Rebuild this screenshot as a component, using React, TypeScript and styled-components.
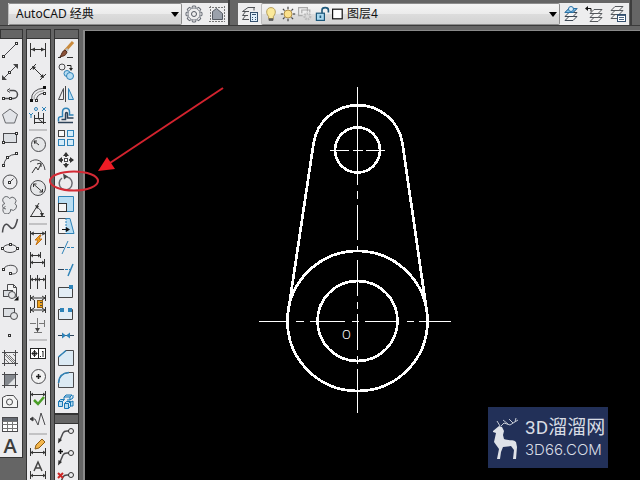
import React, { ReactNode } from "react";
import styled, { createGlobalStyle } from "styled-components";

const INK = "#4a4a4d";
const BLUE = "#2f83b8";
const NAVY = "#2d4258";
const SKY = "#b9ddf2";
const SHADE = "#dcdfe3";

const GlobalStyle = createGlobalStyle`
  * { box-sizing: border-box; }
  body { margin: 0; background: #656565; overflow: hidden; }
  button, select { font-family: "Noto Sans", "Noto Sans CJK SC", sans-serif; }
`;

const Window = styled.div`
  display: flex;
  flex-direction: column;
  height: 100vh;
  background: #656565;
  overflow: hidden;
`;

const TopBar = styled.header`
  display: flex;
  flex: none;
  height: 26px;
  padding: 3px 8px 0;
  background: #656565;
  border-bottom: 1px solid #3a3a3a;
`;

const Toolbar = styled.div<{ $grow?: boolean }>`
  display: flex;
  flex: ${(p) => (p.$grow ? "1" : "none")};
  min-width: 0;
  height: 22px;
  background: #ededee;
`;

const Divider = styled.div<{ $last?: boolean }>`
  flex: none;
  width: 2px;
  height: 25px;
  margin: -3px ${(p) => (p.$last ? "0" : "8px")} 0 ${(p) => (p.$last ? "1px" : "0")};
  background: #3d3d3d;
`;

const Combo = styled.div<{ $grow?: boolean }>`
  position: relative;
  display: flex;
  align-items: center;
  flex: ${(p) => (p.$grow ? "1" : "none")};
  width: ${(p) => (p.$grow ? "auto" : "174px")};
  min-width: 0;
  height: 22px;
  padding-left: ${(p) => (p.$grow ? "1px" : "0")};
  border: 1px solid #8d8d8d;
  border-left-color: #bdbdbd;
  border-radius: 2px;
  background: linear-gradient(#f5f5f5, #ebebeb 50%, #dcdcdc 52%, #d2d2d2);
`;

const Select = styled.select<{ $indent: number }>`
  flex: 1;
  min-width: 0;
  height: 20px;
  padding: 0 20px 0 ${(p) => p.$indent}px;
  border: 0;
  outline: 0;
  appearance: none;
  background: transparent;
  color: #111;
  font-size: 12px;
  line-height: 20px;
`;

const Caret = styled.svg`
  position: absolute;
  right: 2px;
  top: 8px;
  width: 8px;
  height: 5px;
  pointer-events: none;
`;

const StateIcons = styled.span`
  display: flex;
  flex: none;
  gap: 1px;
`;

const BarButton = styled.button`
  flex: none;
  width: 23px;
  height: 22px;
  padding: 1px;
  border: 0;
  background: transparent;
`;

const Workspace = styled.div`
  display: flex;
  flex: 1;
  min-height: 0;
  padding-top: 3px;
`;

const Column = styled.div<{ $first?: boolean }>`
  flex: none;
  width: ${(p) => (p.$first ? "23px" : "25px")};
  margin-right: 3px;
`;

const Palette = styled.div<{ $first?: boolean }>`
  padding-left: ${(p) => (p.$first ? "0" : "1px")};
  background: #ececee;
  border: 1px solid #343434;
  border-left-width: ${(p) => (p.$first ? "0" : "1px")};
  border-top-width: 0;
`;

const Grip = styled.div`
  height: 10px;
  background: #656565;
  border: 1px solid #343434;
`;

const Tool = styled.button`
  display: flex;
  align-items: center;
  justify-content: center;
  width: 20px;
  height: 22px;
  padding: 0;
  border: 0;
  background: transparent;
  color: #333;
`;

const Letter = styled.span`
  font-family: "Open Sans", sans-serif;
  font-size: 20px;
  line-height: 20px;
  font-weight: 600;
  color: #3d3d3d;
`;

const Separator = styled.div`
  height: 2px;
  margin: 2px 3px 2px 1px;
  background: #c2c2c4;
`;

const Canvas = styled.main`
  position: relative;
  flex: 1;
  min-width: 0;
  margin-left: 1px;
  margin-top: 1px;
  border-top: 1px solid #8a8a8a;
  border-left: 2px solid #8a8a8a;
  background: #000;
`;

const Drawing = styled.svg`
  display: block;
  width: 100%;
  height: 100%;
`;

const Annotation = styled.svg`
  position: absolute;
  left: 40px;
  top: 80px;
  width: 190px;
  height: 120px;
  pointer-events: none;
`;

const Watermark = styled.div`
  position: absolute;
  right: 32px;
  bottom: 12px;
  display: flex;
  align-items: center;
  gap: 4px;
  width: 120px;
  height: 61px;
  padding-left: 3px;
  background: #223058;
  color: #d8dce4;
`;

const Brand = styled.div`
  display: flex;
  flex-direction: column;
`;

const BrandName = styled.span`
  font-family: Roboto, "Noto Sans CJK SC", sans-serif;
  font-size: 19px;
  line-height: 22px;
  font-weight: 400;
  white-space: nowrap;
`;

const BrandSite = styled.span`
  margin-top: 3px;
  font-family: Inter, sans-serif;
  font-size: 15px;
  line-height: 16px;
  font-weight: 300;
  white-space: nowrap;
`;

function Icon({ children, size = 20 }: { children: ReactNode; size?: number }) {
  return (
    <svg width={size} height={size} viewBox="0 0 20 20" fill="none" stroke={INK} strokeWidth="1" aria-hidden="true">
      {children}
    </svg>
  );
}

/* Small square handle centred on a point. */
function Grips({ at, fill = "#fff", color = "#333" }: { at: number[][]; fill?: string; color?: string }) {
  return (
    <>
      {at.map(([x, y]) => (
        <rect key={`${x}-${y}`} x={x - 1} y={y - 1} width="2" height="2" fill={fill} stroke={color} />
      ))}
    </>
  );
}

type Item = { name: string; icon: ReactNode } | "separator";

const span = (y: number) => (
  <path d={`M2.5 ${y - 3}v6M17.5 ${y - 3}v6M3 ${y}h14M6 ${y - 2}l-3 2 3 2M14 ${y - 2}l3 2-3 2`} stroke="#333" />
);

const leader = (
  <>
    <path d="M4 15l3-7q1-2 4-2h2" strokeWidth="1.500" />
    <circle cx="15" cy="6" r="2.500" stroke="#333" />
    <path d="M2 18.500l.5-5.500 3.500 2z" fill="#333" stroke="none" />
  </>
);

const drawTools: Item[] = [
  { name: "Line", icon: <><path d="M3.500 16.500L16.500 3.500" /><Grips at={[[3.5, 16.500], [16.500, 3.500]]} /></> },
  { name: "Construction line", icon: <><path d="M3 17L17 3" /><path d="M2 18v-5l5 5zM18 2v5l-5-5z" fill="#444" stroke="none" /><Grips at={[[9.500, 10.500]]} /></> },
  { name: "Polyline", icon: <><path d="M3.500 14.500h10a4 4 0 0 0 0-8H9.500" strokeWidth="1.500" /><path d="M10 4.500l-3 2 3 2" /><Grips at={[[3.5, 14.500], [10.5, 14.500]]} /></> },
  { name: "Polygon", icon: <path d="M10 3l7.500 5.500-3 8.500h-9l-3-8.500z" fill="#e2e4e8" stroke="#66686c" /> },
  { name: "Rectangle", icon: <><rect x="3.500" y="5.500" width="13" height="9" fill={SHADE} /><Grips at={[[3.5, 14.500], [16.500, 5.500]]} /></> },
  { name: "Arc", icon: <><path d="M3.500 16Q5 5 16.500 4" /><Grips at={[[3.5, 15.500], [7.500, 7.500], [16.500, 3.500]]} /></> },
  { name: "Circle", icon: <><circle cx="10" cy="10" r="7" /><path d="M9.500 10.500l4-4" /><Grips at={[[9.500, 10.500]]} /></> },
  { name: "Revision cloud", icon: <path d="M5 9.500A3.600 3.600 0 1 1 9.500 4.500 3.600 3.600 0 1 1 15 9.500 3.600 3.600 0 1 1 10.500 15.500 3.800 3.800 0 1 1 5.500 12.500M5 9.500Q2 10 2.500 12.500T6 15" fill="#e7e8ea" stroke="#66686c" /> },
  { name: "Spline", icon: <path d="M2.500 16.500C3 9 6 6 9 10s6 4 8.500-7" strokeWidth="1.500" /> },
  { name: "Ellipse", icon: <><ellipse cx="10" cy="10.500" rx="7" ry="4" /><Grips at={[[2.500, 10.500], [17.500, 10.500], [10.500, 6.500]]} /></> },
  { name: "Elliptical arc", icon: <><path d="M3.500 9C6 4 16 4 17 9s-3 5-6 5" /><Grips at={[[3.500, 9.500], [10.500, 13.500]]} /></> },
  { name: "Insert block", icon: <><path d="M7.500 8V2.500h6l3 3V15h-3" fill="#f4f4f4" /><path d="M13.500 2.500v3h3" /><rect x="3.500" y="8.500" width="9" height="6" fill={SHADE} /><circle cx="12" cy="13" r="3.500" fill="#e5e6e8" /><path d="M18.500 14v4.500H14z" fill="#111" stroke="none" /></> },
  { name: "Make block", icon: <><rect x="3.500" y="4.500" width="11" height="8" fill={SHADE} /><circle cx="14" cy="12" r="3.500" fill="#e5e6e8" /></> },
  { name: "Point", icon: <rect x="8.500" y="8.500" width="2" height="2" stroke="#333" /> },
  { name: "Hatch", icon: <><path d="M5 7l8 8M5 11l4 4M9 7l6 6M5 5l10 10M13 6l2 2" stroke="#777" /><path d="M2 4.500h16M2 15.500h16M4.500 2v16M15.500 2v16" /></> },
  { name: "Gradient", icon: <><rect x="5" y="5" width="10" height="10" fill="#85898f" stroke="none" /><path d="M8 15l7-7v7z" fill="#e2e4e6" stroke="none" /><path d="M2 4.500h16M2 15.500h16M4.500 2v16M15.500 2v16" /></> },
  { name: "Region", icon: <><path d="M2.500 15.500v-10l4-2h7l4 5v7z" fill="#f4f4f4" /><circle cx="9.500" cy="10" r="3" /></> },
  { name: "Table", icon: <><rect x="2.500" y="3.500" width="15" height="14" fill="#fff" /><path d="M3 4h14v3H3z" fill="#666b72" stroke="none" /><path d="M2.500 7.500h15M2.500 10.500h15M2.500 14.500h15M7.500 7v10M12.500 7v10" stroke="#777" /></> },
  { name: "Multiline text", icon: null },
];

const dimensionTools: Item[] = [
  { name: "Linear", icon: <><path d="M2.500 3v14M17.500 3v14M3 9.500h14" stroke="#333" /><path d="M3 9.500l4-2v4zM17 9.500l-4-2v4z" fill="#333" stroke="none" /></> },
  { name: "Aligned", icon: <><path d="M5 5l10 10M2 8l6-6M12 18l6-6" stroke="#333" /><path d="M4 4l4 1-3 3zM16 16l-4-1 3-3z" fill="#333" stroke="none" /></> },
  { name: "Arc length", icon: <><path d="M3.500 16Q3 5 16.500 4M8.500 16q0-6 8-7" /><path d="M6 16Q5 8 16 6.500" stroke="#999" /><Grips at={[[3.500, 16.500], [16.500, 3.500]]} fill="#111" color="#111" /><Grips at={[[8.500, 16.500], [16.500, 9.500]]} /></> },
  { name: "Ordinate", icon: <><path d="M6.500 9v9M6 16.500h12M10.500 6v7l5 4M15.500 7v11M6 12.500h10" stroke="#333" /><path d="M1 7l2 2 2-2M3 9v3M14 1l4 4M18 1l-4 4" stroke={BLUE} /><circle cx="8" cy="3" r="1.500" stroke={BLUE} /></> },
  "separator",
  { name: "Radius", icon: <><circle cx="10.500" cy="10.500" r="7" fill="#e5e6e8" /><path d="M6 7l5 4M6 7l1 3M6 7h3" stroke="#333" /></> },
  { name: "Jogged", icon: <><path d="M2 6c6-5 14-1 15 8" /><path d="M4 17l4-6 2 3 3-6M13 7l-4 1M13 7v4" stroke="#333" /></> },
  { name: "Diameter", icon: <><circle cx="10" cy="10" r="7.500" fill="#e5e6e8" /><path d="M5.500 6l9 8M5.500 9V6h3M14.500 11v3h-3" stroke="#333" /></> },
  { name: "Angular", icon: <><path d="M2 16.500h15M3 16L11 3M8 7q6 2 6 9" stroke="#333" /><path d="M7 5l4 1-2 3zM12 13h4l-2 4z" fill="#333" stroke="none" /></> },
  "separator",
  { name: "Quick dimension", icon: <><path d="M2.500 3v14M17.500 3v14M3 5.500h14M6 4L3 5.500l3 1.500M14 4l3 1.500-3 1.500" stroke="#333" /><path d="M12 7l-5 5h3l-2 5 6-6h-3l2-4z" fill="#f2a51d" stroke="#c26f16" /></> },
  { name: "Baseline", icon: <><path d="M2.500 2v16M12.500 2v6M16.500 9v8M3 5.500h9M3 12.500h13M5 4L3 5.500l2 1.500M10 4l2 1.500-2 1.500M5 11l-2 1.500 2 1.500M14 11l2 1.500-2 1.500" stroke="#333" /></> },
  { name: "Continue", icon: <><path d="M2.500 3v14M9.500 3v14M17.500 3v14M3 7.500h14M5 6L3 7.500l2 1.500M7 6l2 1.500-2 1.500M12 6l-2 1.500 2 1.500M15 6l2 1.500-2 1.500" stroke="#333" /></> },
  { name: "Dimension space", icon: <>{span(4)}{span(16)}<path d="M6.500 6v8" stroke="#333" /><rect x="9.500" y="6.500" width="5" height="7" fill="#f2a51d" stroke="#8c5c14" /><path d="M12 8.500h2M12 11.500h2" /></> },
  { name: "Dimension break", icon: <><path d="M2 7.500h6M11 7.500h5M16.500 4v7M9.500 2v14M6 16.500h8" stroke="#777" /><path d="M7 12l2.500 4 2.500-4z" fill="#444" stroke="none" /></> },
  "separator",
  { name: "Tolerance", icon: <><rect x="2.500" y="4.500" width="15" height="10" fill="#fff" stroke="#222" /><path d="M10.500 4v11M6.500 6v7M3.500 9.500h6M12 12.500h1M15 13V7l-1 1" stroke="#222" /><circle cx="6.500" cy="9.500" r="2" stroke="#222" /></> },
  { name: "Center mark", icon: <><circle cx="10.500" cy="10.500" r="7" fill="#f2f2f2" /><path d="M8 10.500h5M10.500 8v5" stroke="#222" strokeWidth="1.500" /></> },
  { name: "Inspection", icon: <><path d="M2.500 3v14M17.500 3v14M3 6.500h14M5 5L3 6.500l2 1.500M15 5l2 1.500-2 1.500" stroke="#333" /><path d="M6 12l4 4 6-7" stroke="#4a9e27" strokeWidth="2.500" /></> },
  { name: "Jogged linear", icon: <><path d="M2 9h5l3 6 3-12 4 12" /><path d="M2 9l3-2v4z" fill="#222" /></> },
  "separator",
  { name: "Dimension edit", icon: <><path d="M2.500 10v8M17.500 10v8M3 14.500h14M5 13l-2 1.500 2 1.500M15 13l2 1.500-2 1.500" stroke="#333" /><path d="M7 11l1-4 6-6 3 3-6 6z" fill="#f3b64d" stroke="#8c5c14" /></> },
  { name: "Dimension text edit", icon: <><path d="M2.500 11v8M17.500 11v8M3 15.500h14M5 14l-2 1.500 2 1.500M15 14l2 1.500-2 1.500" stroke="#333" /><path d="M6 11l4-9 4 9M7.500 8h5" stroke="#444" strokeWidth="1.500" /></> },
];

const box = (x: number, y: number, blue?: boolean) => (
  <rect x={x} y={y} width="6" height="6" fill={blue ? "#d4ecfa" : "#f8f8f8"} stroke={blue ? BLUE : "#444"} />
);

const modifyTools: Item[] = [
  { name: "Erase", icon: <><path d="M2 17.500h3M11 17.500h6" stroke="#333" /><path d="M17 2L9 11" stroke="#c98a3c" strokeWidth="3" /><path d="M11 8l2 2-2 2-2-2z" fill="#bbb" stroke="none" /><path d="M9 10l2 2c-1 4-4 4-7 5 2-3 2-6 5-7z" fill="#8a5138" stroke="#4e2b1d" /></> },
  { name: "Copy", icon: <><circle cx="6" cy="5" r="3" /><circle cx="11" cy="11.500" r="3" fill={SKY} stroke={BLUE} /><circle cx="14" cy="14" r="3.500" fill={SKY} stroke={BLUE} /><path d="M11 3.500h4v3" stroke="#222" /><path d="M13 6h4l-2 3z" fill="#222" stroke="none" /></> },
  { name: "Mirror", icon: <><path d="M7.500 4.500v11h-5z" /><path d="M12.500 4.500v11h5z" fill={SKY} stroke={BLUE} /><path d="M9.500 2v16" stroke="#444" /></> },
  { name: "Offset", icon: <><path d="M2.500 15.500v-3q0-2 4-2V6c0-5 7-5 7 0v3h4" stroke={BLUE} strokeWidth="1.500" /><path d="M2 16.500h15M5.500 13.500h4V8c0-2 2-2 2 0v4h6" stroke={NAVY} strokeWidth="1.500" /></> },
  { name: "Array", icon: <>{box(2.500, 2.500)}{box(11.500, 2.500, true)}{box(2.500, 11.500, true)}{box(11.500, 11.500, true)}</> },
  { name: "Move", icon: <><path d="M10 3v14M3 10h14" stroke="#444" strokeWidth="2" strokeDasharray="4 6" /><path d="M10 2l3 4H7zM10 18l3-4H7zM2 10l4-3v6zM18 10l-4-3v6z" fill="#333" stroke="none" /><rect x="8.500" y="8.500" width="3" height="3" fill="#fff" /></> },
  { name: "Rotate", icon: <><path d="M11 5a6.500 6.500 0 1 1-5 1" stroke="#6a6a70" strokeWidth="1.500" /><path d="M7 1.500l5 3-4 3z" fill="#444" stroke="none" /></> },
  { name: "Scale", icon: <><path d="M2.500 9V2.500h15v15H10" fill={SKY} stroke={BLUE} /><rect x="2.500" y="9.500" width="8" height="8" fill="#f4f4f4" stroke="#333" /></> },
  { name: "Stretch", icon: <><path d="M10 2.500h4l4 15h-8" fill={SKY} stroke={BLUE} /><path d="M10 2.500H2.500v15H10" fill="#f4f4f4" /><path d="M10 2v16" stroke={BLUE} strokeDasharray="2 1" /><path d="M6 13.500h5" stroke="#111" /><path d="M10 11l4 2.500-4 2.500z" fill="#111" stroke="none" /></> },
  { name: "Trim", icon: <><path d="M2 9.500h6" stroke={NAVY} /><path d="M11 9.500h7" stroke={BLUE} strokeDasharray="3 1" /><path d="M12 3L6 16" stroke={BLUE} /></> },
  { name: "Extend", icon: <><path d="M2 9.500h6" stroke={NAVY} /><path d="M9 9.500h5" stroke={BLUE} strokeDasharray="3 1" /><path d="M17 4l-5 12" stroke={BLUE} strokeWidth="1.500" /></> },
  { name: "Break at point", icon: <><path d="M14 5.500H2.500v10h14V7" stroke="#444" fill="#e3edf5" /><rect x="13" y="3" width="4" height="4" fill={BLUE} stroke="none" /></> },
  { name: "Break", icon: <><path d="M5 5.500H2.500v10h14v-10H15" stroke="#444" fill="#e3edf5" /><path d="M4 4h4v4H4zM12 4h4v4h-4z" fill={BLUE} stroke="none" /></> },
  { name: "Join", icon: <><path d="M2 9.500h16" stroke={NAVY} /><path d="M6 6.500l4 3-4 3zM14 6.500l-4 3 4 3z" fill={BLUE} stroke="none" /></> },
  { name: "Chamfer", icon: <><path d="M2.500 17.500V9L10 2.500h7.500v15z" fill="#dceaf4" /><path d="M2.500 9L10 2.500" stroke={BLUE} strokeWidth="1.500" /></> },
  { name: "Fillet", icon: <><path d="M2.500 17.500v-4Q3 3 13 2.500h4.500v15z" fill="#dceaf4" /><path d="M2.500 13Q3 3 13 2.500" stroke={BLUE} strokeWidth="1.500" /></> },
  { name: "Explode", icon: <><path d="M2.500 9.500h4v5h-4zM2.500 9.500l2-2h4l-2 2M8.500 11.500h4v5h-4zM8.500 11.500l2-2h4l-2 2M12.500 16.500l2-2v-5M8 5l2-2h6l-2 2zM8 5v2M14 5v3h-3M14 8l3-2V3M15 10l2-1v5h-2" fill={SKY} stroke="#1876b4" /></> },
];

const leaderTools: Item[] = [
  { name: "Multileader", icon: leader },
  { name: "Add leader", icon: <>{leader}<path d="M2 4.500h5M4.500 2v5" stroke="#111" strokeWidth="1.500" /></> },
  { name: "Remove leader", icon: <>{leader}<path d="M2 4l5 5M7 4L2 9" stroke="#cc2626" strokeWidth="2" /></> },
];

function Tools({ items }: { items: Item[] }) {
  return (
    <>
      {items.map((item, i) =>
        item === "separator" ? (
          <Separator key={i} />
        ) : (
          <Tool key={item.name} aria-label={item.name}>
            {item.icon ? <Icon>{item.icon}</Icon> : <Letter>A</Letter>}
          </Tool>
        )
      )}
    </>
  );
}

const DownCaret = () => (
  <Caret viewBox="0 0 8 5" aria-hidden="true">
    <path d="M0 0h8L4 5z" fill="#000" />
  </Caret>
);

const sheet = "l4-4h8l-4 4z";

/* Stack of three parallelogram sheets used by the layer commands. */
const sheets = (color: string) => (
  <>
    <path d={`M3 16.500${sheet}`} fill="#f4f4f4" stroke={color} />
    <path d={`M3 12.500${sheet}`} fill="#f4f4f4" stroke={color} />
    <path d={`M3 8.500${sheet}`} fill="#f4f4f4" stroke={color} />
  </>
);

const gearTeeth = Array.from({ length: 8 }, (_, i) => i * 45);

export default function App() {
  return (
    <>
      <GlobalStyle />
      <Window>
        <TopBar>
          <Toolbar>
            <Combo>
              <Select $indent={7} aria-label="Workspace" defaultValue="classic">
                <option value="classic">AutoCAD 经典</option>
              </Select>
              <DownCaret />
            </Combo>
            <BarButton aria-label="Workspace settings">
              <Icon>
                {gearTeeth.map((a) => (
                  <path key={a} d="M8 4l.5-2h3l.500 2" transform={`rotate(${a} 10 10)`} stroke="#666b74" />
                ))}
                <circle cx="10" cy="10" r="6" stroke="#858991" fill="#eee" />
                <circle cx="10" cy="10" r="2.500" stroke="#555a63" />
              </Icon>
            </BarButton>
            <BarButton aria-label="My workspace">
              <Icon>
                <path d="M2 3.500h16M2 17.500h16M3.500 2v16M17.500 2v16" stroke="#777" strokeDasharray="2 1" />
                <path d="M5.500 15.500v-8l4-3 6 5v6z" fill="#9aa1ab" stroke="#555b63" />
              </Icon>
            </BarButton>
          </Toolbar>
          <Divider />
          <Toolbar $grow>
            <BarButton aria-label="Layer properties">
              <Icon>
                <path d="M15 3.500H8L2.500 7.500H9M6 7L2.500 11.500H8M6 11l-3.500 4.500H9M14 3.500v3" stroke="#4f5256" />
                <rect x="10.500" y="8.500" width="7" height="9" fill="#dfeefa" stroke="#34506e" />
                <path d="M12 10.500h4M12 13.500h1M15 13.500h1M12 15.500h1M15 15.500h1" stroke="#34506e" />
              </Icon>
            </BarButton>
            <Combo $grow>
              <StateIcons>
                <Icon size={16}>
                  <path d="M7 13C3 9 4 2 10 2s7 7 3 11v3H7z" fill="#fbe99a" stroke="#a58b42" />
                  <path d="M7.500 16h5v2h-5z" fill="#666" stroke="#555" />
                </Icon>
                <Icon size={16}>
                  {gearTeeth.map((a) => (
                    <path key={a} d="M10 1v3" transform={`rotate(${a} 10 10)`} stroke="#444" strokeWidth="1.500" />
                  ))}
                  <circle cx="10" cy="10" r="5" fill="#fbe08a" stroke="#9e7b35" />
                </Icon>
                <Icon size={16}>
                  <path d="M7 12H2V2h11v5M6 9V5h10v3" stroke="#aaa" strokeWidth="1.500" />
                  <circle cx="13" cy="13" r="3.500" stroke="#bbb" strokeWidth="3" strokeDasharray="2 1" />
                </Icon>
                <Icon size={16}>
                  <rect x="3" y="9" width="10" height="9" fill="#a9d8ef" stroke="#1d587a" strokeWidth="1.500" />
                  <path d="M10 9V5c0-4 8-4 8 0v3M8 12v3" stroke="#1d587a" strokeWidth="2" />
                </Icon>
                <Icon size={16}>
                  <rect x="2" y="4" width="12" height="12" fill="#fff" stroke="#111" strokeWidth="1.500" />
                </Icon>
              </StateIcons>
              <Select $indent={0} aria-label="Layer" defaultValue="4">
                <option value="4">图层4</option>
              </Select>
              <DownCaret />
            </Combo>
            <BarButton aria-label="Make object layer current">
              <Icon>
                {sheets("#3b4652")}
                <path d={`M3 8.500${sheet}`} fill="#85c3ea" stroke="#2872a8" />
                <circle cx="9" cy="5" r="2.500" fill="#dceefa" stroke="#2872a8" />
              </Icon>
            </BarButton>
            <BarButton aria-label="Layer previous">
              <Icon>
                <g transform="translate(2 1)">{sheets("#55585c")}</g>
                <path d="M2 4.500h4v3" stroke="#111" />
                <path d="M0 4.500L3 2v5z" fill="#111" stroke="none" />
              </Icon>
            </BarButton>
            <BarButton aria-label="Layer states">
              <Icon>
                <g transform="translate(0 -2)">{sheets("#55585c")}</g>
                <rect x="9.500" y="10.500" width="8" height="7" fill="#fff" stroke="#34506e" />
                <path d="M10 11.500h7M11 13.500h5M11 15.500h5" stroke="#4b6480" />
              </Icon>
            </BarButton>
          </Toolbar>
          <Divider $last />
        </TopBar>
        <Workspace>
          <Column $first>
            <Grip />
            <Palette $first><Tools items={drawTools} /></Palette>
          </Column>
          <Column>
            <Grip />
            <Palette><Tools items={dimensionTools} /></Palette>
          </Column>
          <Column>
            <Grip />
            <Palette><Tools items={modifyTools} /></Palette>
            <Grip />
            <Palette><Tools items={leaderTools} /></Palette>
          </Column>
          <Canvas>
            <Drawing viewBox="85 31 555 449" fill="none" stroke="#fff" shapeRendering="crispEdges">
              <g strokeWidth="2.700">
                <path d="M288.300 311L313.500 143.500A45 45 0 0 1 402.500 143.500L426.700 311" />
                <circle cx="357.500" cy="150" r="22.500" />
                <circle cx="357.500" cy="321" r="70" />
                <circle cx="357.500" cy="321" r="40" />
              </g>
              <path d="M357.500 87v98M357.500 191v8M357.500 205v35M357.500 246v5M357.500 260v36M357.500 302v7M357.500 314v36M357.500 356v8M357.500 369v44" />
              <path d="M259 321.500h28M296 321.500h8M310 321.500h35M352 321.500h7M365 321.500h34M407 321.500h7M419 321.500h32" />
              <path d="M330 150.500h19M353 150.500h10M366 150.500h19" />
              <text x="342" y="339" fill="#fff" stroke="none" fontFamily="Roboto, sans-serif" fontWeight="300" fontSize="13">O</text>
            </Drawing>
            <Watermark>
              <svg width="30" height="42" viewBox="0 0 30 42" aria-hidden="true">
                <path d="M2 14l6-5 3 1 2 4-1 4 1 4c4 2 9 0 12 3l1 5-1 12h-3l1-9-3-4-8 1-2 5-1 7H6l2-10-5-7 2-9-3-1z" fill="#dfe2e8" />
                <path d="M9 9L6 4M10 9l3-3 6 2 8-5M17 7l-5-4M22 6l-4-4M24 5l1-4" fill="none" stroke="#c4c9d4" strokeWidth="1" />
              </svg>
              <Brand>
                <BrandName>3D溜溜网</BrandName>
                <BrandSite>3D66.COM</BrandSite>
              </Brand>
            </Watermark>
          </Canvas>
        </Workspace>
        <Annotation viewBox="40 80 190 120" aria-hidden="true">
          <ellipse cx="74" cy="181" rx="24" ry="9.500" fill="none" stroke="#d42a35" strokeWidth="2" />
          <path d="M223 88L110 163" stroke="#d3232e" strokeWidth="2" />
          <path d="M98 171l9-14 8 12z" fill="#ee1c25" />
        </Annotation>
      </Window>
    </>
  );
}
